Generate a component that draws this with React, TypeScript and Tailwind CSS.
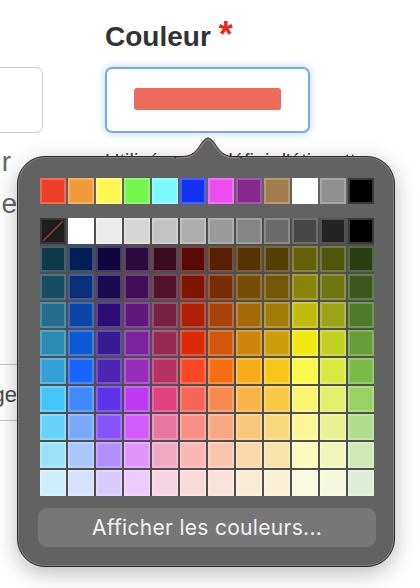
import React from "react";

const suggested = [
  "#ec3f26",
  "#f19a3a",
  "#fdf952",
  "#74f64b",
  "#7afafd",
  "#1233f4",
  "#eb4ff0",
  "#87288f",
  "#a47b4c",
  "#ffffff",
  "#8f8f8f",
  "#000000",
];

const grays = [
  "none",
  "#ffffff",
  "#ebebeb",
  "#d6d6d6",
  "#c2c2c2",
  "#adadad",
  "#999999",
  "#858585",
  "#6b6b6b",
  "#474747",
  "#242424",
  "#000000",
];

const grid = [
  ["#0f384a", "#031f58", "#11063b", "#2c0a3d", "#3b0c1d", "#580b05", "#572003", "#563504", "#533e04", "#656007", "#4f550a", "#283f12"],
  ["#184d64", "#0b307b", "#1b0c52", "#440f58", "#53122a", "#7f1604", "#782c04", "#774c04", "#745805", "#8a8408", "#6e750f", "#3a581c"],
  ["#236e8e", "#0c44a8", "#2d0c76", "#60197b", "#77203f", "#b01f07", "#a94206", "#a46a08", "#a27c09", "#c1ba0c", "#9aa416", "#4f7a2a"],
  ["#2a8cb3", "#0e58d4", "#381c93", "#79249d", "#962a52", "#dc2b0a", "#d4560a", "#cf840c", "#cd9e0c", "#f1e912", "#c2d022", "#689d38"],
  ["#34a1d6", "#1765fb", "#4e25b1", "#962ebb", "#b63262", "#f94823", "#f76e12", "#f8ab18", "#f6c716", "#fbf84a", "#d8ea40", "#78ba45"],
  ["#44c5f8", "#428afb", "#5f33e9", "#bc3cf1", "#e2427f", "#f86555", "#f78a4e", "#f8b446", "#f8ca44", "#fbf570", "#e3ee6b", "#97d262"],
  ["#66d4f9", "#78a8fc", "#8753fc", "#d25cfb", "#ea77a2", "#f98e86", "#f8a880", "#f8c77b", "#f9d87b", "#fbf796", "#e9f193", "#b2dc8d"],
  ["#9ae1f9", "#a9c6fd", "#b18ffc", "#e195fb", "#f1a8c3", "#fab7b1", "#f9c6ad", "#f9d9aa", "#f8e3aa", "#fbf9bb", "#f0f6b9", "#cde8b7"],
  ["#cdeffd", "#d4e2fd", "#d9cafc", "#eecbfc", "#f7d4e1", "#fbdbd9", "#fae2d7", "#faebd5", "#faf0d6", "#fafade", "#f5f9dc", "#deeed5"],
];

const Swatch = ({ color }: { color: string }) => {
  if (color === "none") {
    return (
      <div className="h-[26px] w-[26px] bg-[#1e1e1e] shadow-[inset_0_0_0_2px_rgba(255,255,255,0.12)]">
        <svg width="26" height="26" viewBox="0 0 26 26">
          <line x1="3" y1="23" x2="23" y2="3" stroke="#a3322a" strokeWidth="1.5" />
        </svg>
      </div>
    );
  }
  return (
    <div
      className="h-[26px] w-[26px] shadow-[inset_0_0_0_2px_rgba(255,255,255,0.22)]"
      style={{ backgroundColor: color }}
    />
  );
};

const ColorPopover = () => {
  return (
    <div className="absolute left-[17px] top-[156px] z-10 h-[411px] w-[378px]">
      {/* pointer */}
      <svg
        className="absolute -top-[23px] left-[157px] z-20"
        width="68"
        height="26"
        viewBox="0 0 68 26"
      >
        <path
          d="M0 24 C16 24 20 22 27 11 C32 3 36 3 41 11 C48 22 52 24 68 24 L68 26 L0 26 Z"
          fill="#626262"
        />
        <path
          d="M0 24 C16 24 20 22 27 11 C32 3 36 3 41 11 C48 22 52 24 68 24"
          fill="none"
          stroke="#2c2c2c"
          strokeWidth="1"
        />
        <path
          d="M2 25 C17 25 21 23 28 12 C32 5 36 5 40 12 C47 23 51 25 66 25"
          fill="none"
          stroke="#9c8886"
          strokeWidth="1"
        />
      </svg>
      <div className="flex h-full w-full flex-col rounded-[28px] border border-[#2c2c2c] bg-[#626262] pl-[22px] pt-[21px] shadow-[inset_0_0_0_1px_rgba(255,225,225,0.22),0_6px_22px_rgba(0,0,0,0.28)]">
        <div className="grid w-fit grid-cols-[repeat(12,26px)] gap-[2px]">
          {suggested.map((c, i) => (
            <Swatch key={i} color={c} />
          ))}
        </div>
        <div className="mt-[14px] grid w-fit grid-cols-[repeat(12,26px)] gap-[2px] bg-[#4f4f4f]">
          {grays.map((c, i) => (
            <Swatch key={"g" + i} color={c} />
          ))}
          {grid.flat().map((c, i) => (
            <Swatch key={"c" + i} color={c} />
          ))}
        </div>
        <button className="-ml-[2px] mt-[12px] flex h-[39px] w-[338px] items-center justify-center rounded-[9px] bg-[#777777] font-['Inter',sans-serif] text-[21px] tracking-[0.3px] text-[#f2f2f2]">
          Afficher les couleurs...
        </button>
      </div>
    </div>
  );
};

export default function App() {
  return (
    <div className="relative h-[588px] w-[420px] overflow-hidden bg-white font-['Liberation_Sans',Arial,sans-serif]">
      <div className="flex gap-[62px]">
        {/* previous column, cut off by the page edge */}
        <div className="flex w-[43px] shrink-0 flex-col">
          <div className="-ml-[20px] mt-[67px] h-[66px] w-[63px] rounded-[7px] border border-[#cdcdcd]" />
          <div className="mt-[8px] flex w-[11px] justify-end whitespace-nowrap text-[28px] leading-[42px] text-[#666]">
            Valeur
          </div>
          <div className="flex w-[17px] justify-end whitespace-nowrap text-[28px] leading-[42px] text-[#666]">
            Taille
          </div>
          <div className="-ml-[20px] mt-[139px] flex h-[57px] w-[60px] items-center border-y border-[#c9c9c9]">
            <div className="flex w-[37px] justify-end whitespace-nowrap pt-[4px] text-[22px] text-[#4a4a4a]">
              Partage
            </div>
          </div>
        </div>

        <div className="flex flex-col">
          <div className="mt-[21px] flex items-start">
            <span className="text-[28px] font-bold leading-[32px] text-[#333]">Couleur</span>
            <span className="-mt-[4px] ml-[8px] text-[36px] font-bold leading-[36px] text-[#e8291f]">*</span>
          </div>
          <div className="mt-[14px] flex h-[66px] w-[205px] items-center justify-center rounded-[7px] border-2 border-[#74a9e8] bg-white shadow-[0_0_6px_2px_rgba(110,165,235,0.3)]">
            <div className="mt-[-2px] h-[22px] w-[147px] rounded-[3px] bg-[#ec6b5a]" />
          </div>
          <div className="mt-[16px] whitespace-nowrap text-[20px] leading-[24px] text-[#444]">
            Utilisée pour définir l'étiquette
          </div>
        </div>
      </div>
      <ColorPopover />
    </div>
  );
}
